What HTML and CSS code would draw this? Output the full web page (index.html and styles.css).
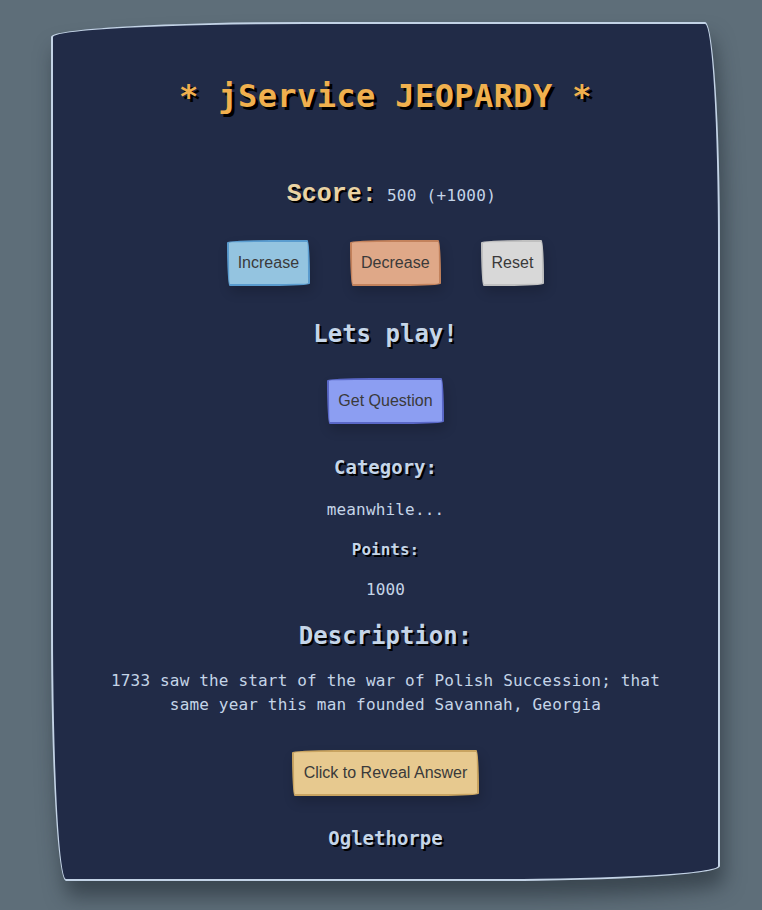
FILE: index.html
```html
<!DOCTYPE html>
<html>
<head>
<meta charset="utf-8">
<link rel="stylesheet" href="styles.css">
</head>
<body>
<main class="card">
  <h1 class="title">* jService JEOPARDY *</h1>
  <div class="score-row">
    <span class="score-label">Score:</span>
    <span class="score-value">500 (+1000)</span>
  </div>
  <div class="btn-row">
    <button class="btn btn-blue">Increase</button>
    <button class="btn btn-orange">Decrease</button>
    <button class="btn btn-grey">Reset</button>
  </div>
  <h2 class="heading play">Lets play!</h2>
  <button class="btn btn-violet">Get Question</button>
  <h3 class="heading category">Category:</h3>
  <p class="text cat-value">meanwhile...</p>
  <h4 class="heading points">Points:</h4>
  <p class="text points-value">1000</p>
  <h2 class="heading desc">Description:</h2>
  <p class="text desc-text">1733 saw the start of the war of Polish Succession; that same year this man founded Savannah, Georgia</p>
  <button class="btn btn-sand">Click to Reveal Answer</button>
  <h3 class="heading answer">Oglethorpe</h3>
</main>
</body>
</html>
```
FILE: styles.css
```css
html, body {
  margin: 0;
  padding: 0;
}
body {
  background: #5e6e79;
  width: 762px;
  height: 910px;
  overflow: hidden;
  padding-top: 22px;
  box-sizing: border-box;
}
.card {
  margin-left: 51px;
  width: 669px;
  height: 859px;
  box-sizing: border-box;
  background: #212b47;
  border: 2px solid #c3d3e6;
  border-radius: 255px 15px 225px 15px / 15px 225px 15px 255px;
  box-shadow: 4px 16px 20px rgba(30, 38, 48, 0.55);
  display: flex;
  flex-direction: column;
  align-items: center;
  padding-top: 53px;
  font-family: "DejaVu Sans Mono", "Liberation Mono", monospace;
  color: #c5d5e8;
}
.title {
  margin: 0;
  font-size: 32px;
  line-height: 38px;
  font-weight: bold;
  color: #f0b04e;
  text-shadow: 3px 3px 0 #000;
  letter-spacing: 0.4px;
}
.score-row {
  margin-top: 65px;
  padding-left: 12px;
  display: flex;
  align-items: baseline;
  gap: 10px;
}
.score-label {
  font-family: "Liberation Mono", "DejaVu Sans Mono", monospace;
  font-weight: bold;
  font-size: 25px;
  color: #ead3a4;
  text-shadow: 2px 2px 0 #000;
}
.score-value {
  font-size: 16px;
  letter-spacing: 0.3px;
  color: #c5d5e8;
}
.btn-row {
  margin-top: 31px;
  display: flex;
  gap: 40px;
}
.btn {
  font-family: "Liberation Sans", Arial, sans-serif;
  font-size: 16px;
  line-height: 18px;
  color: #3a3a3a;
  padding: 12px 9px;
  border: 2px solid;
  border-radius: 255px 15px 225px 15px / 15px 225px 15px 255px;
  box-shadow: 2px 6px 12px rgba(0, 0, 0, 0.18);
}
.btn-blue {
  background: #94c4e0;
  border-color: #5a9ccf;
}
.btn-orange {
  background: #dfa888;
  border-color: #c3825c;
}
.btn-grey {
  background: #d8d8d8;
  border-color: #c0c0c0;
}
.btn-violet {
  background: #8c9ef2;
  border-color: #5a68c8;
  margin-top: 30px;
}
.btn-sand {
  background: #e7c98f;
  border-color: #c9a461;
  margin-top: 33px;
  padding-left: 10px;
  padding-right: 10px;
}
.heading {
  margin: 0;
  font-weight: bold;
  color: #c5d5e8;
  text-shadow: 2px 2px 0 #000;
}
.play {
  font-size: 24px;
  line-height: 28px;
  margin-top: 34px;
}
.category {
  font-size: 19px;
  line-height: 22px;
  margin-top: 32px;
}
.points {
  font-size: 16px;
  line-height: 20px;
  margin-top: 18px;
}
.desc {
  font-size: 24px;
  line-height: 28px;
  margin-top: 20px;
}
.answer {
  font-size: 19px;
  line-height: 22px;
  margin-top: 31px;
}
.text {
  margin: 0;
  font-size: 16px;
  line-height: 24px;
  letter-spacing: 0.17px;
  color: #c5d5e8;
}
.cat-value {
  margin-top: 20px;
}
.points-value {
  margin-top: 18px;
}
.desc-text {
  margin-top: 19px;
  width: 570px;
  text-align: center;
}
```
